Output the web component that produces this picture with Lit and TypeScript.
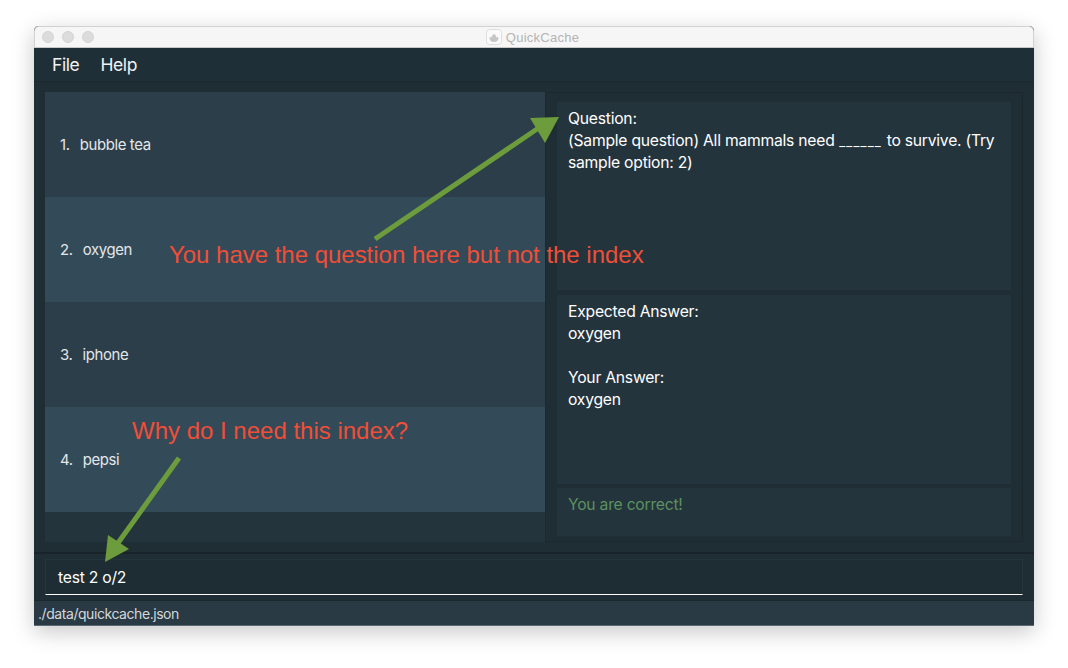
import { LitElement, html, css } from "lit";
import { customElement } from "lit/decorators.js";

@customElement("app-root")
export class AppRoot extends LitElement {
  static styles = css`
    :host { display: block; width: 1068px; height: 668px; background: #fff; position: relative; overflow: hidden; font-family: Inter, "Noto Sans", sans-serif; }
    .page { padding: 26px 34px 0; }
    .win { width: 1000px; height: 600px; border-radius: 5px 5px 2px 2px; display: flex; flex-direction: column; box-shadow: 0 6px 22px rgba(0,0,0,.22); overflow: hidden; background: #1f2d34; }
    .title { height: 22px; flex: none; background: #f6f6f6; border: 1px solid #d2d2d2; border-bottom-color: #c8c8c8; border-radius: 5px 5px 0 0; box-sizing: border-box; position: relative; display: flex; align-items: center; justify-content: center; gap: 4px; padding-right: 3px; color: #b4b4b4; font: 13px "Liberation Sans", sans-serif; letter-spacing: .25px; }
    .lights { position: absolute; left: 7px; top: 4px; display: flex; gap: 8px; }
    .lights i { width: 12px; height: 12px; border-radius: 50%; background: #dcdcdc; border: 1px solid #d2d2d2; box-sizing: border-box; }
    .appicon { width: 16px; height: 16px; }
    .menu { height: 34px; flex: none; box-sizing: border-box; background: #1f2f37; border-bottom: 1px solid #1a282e; display: flex; align-items: center; padding: 0 0 1px 18px; gap: 21px; color: #f0f2f3; font-size: 17.5px; letter-spacing: -.4px; }
    .main { height: 472px; flex: none; box-sizing: border-box; padding: 10px 11px; display: flex; background: #1f2e35; border-bottom: 2px solid #18242a; }
    .list { width: 500px; flex: none; background: #24343c; display: flex; flex-direction: column; }
    .cell { height: 105px; flex: none; display: flex; align-items: center; box-sizing: border-box; padding: 1px 0 0 15px; color: #e4e7e9; font-size: 14.9px; letter-spacing: -.35px; background: #2b3e4a; white-space: pre; }
    .cell.alt { background: #334a59; }
    .idx { margin-right: 10px; }
    .right { flex: 1; box-sizing: border-box; border: 1px solid #1b292f; background: #1f2e35; padding: 9px 11px 5px; display: flex; flex-direction: column; gap: 5px; }
    .card { background: #24343c; box-sizing: border-box; padding: 6px 11px; color: #fff; font-size: 15.7px; line-height: 22px; letter-spacing: -.24px; }
    .line { display: flex; white-space: pre; align-items: baseline; }
    .blank { font-size: 13px; letter-spacing: 1.2px; margin: 0 .5px; }
    .q { height: 188px; flex: none; }
    .a { height: 189px; flex: none; margin-bottom: -1px; }
    .r { flex: 1; color: #5c9160; }
    .cmdwrap { height: 47px; flex: none; box-sizing: border-box; padding: 5px 11px; background: #1f2e35; border-bottom: 1px solid #1a272d; display: flex; }
    .cmd { flex: 1; box-sizing: border-box; border: 1px solid #24343b; border-bottom: 1px solid #fff; background: #1e2d34; color: #fff; font-size: 15.7px; letter-spacing: -.24px; padding: 0 12px; display: flex; align-items: center; }
    .status { flex: 1; background: #293a45; color: #d4d8db; font-size: 14px; letter-spacing: -.44px; padding: 1px 4px 0; display: flex; align-items: center; border-bottom: 1px solid #5a6a72; }
    .overlay { position: absolute; inset: 0; width: 1068px; height: 668px; pointer-events: none; }
    .note { position: absolute; color: #f04e37; font: 24px/28px "Liberation Sans", sans-serif; white-space: nowrap; }
    .n1 { left: 169px; top: 241px; letter-spacing: -.02px; }
    .n2 { left: 132px; top: 417px; }
  `;

  render() {
    const rows = ["bubble tea", "oxygen", "iphone", "pepsi"];
    return html`
      <div class="page">
        <div class="win">
          <div class="title">
            <div class="lights"><i></i><i></i><i></i></div>
            <svg class="appicon" viewBox="0 0 16 16">
              <rect x=".5" y=".5" width="15" height="15" rx="3" fill="#fafafa" stroke="#dedede"/>
              <path d="M3.5 9 C3.5 7.5 5 8 5.5 8.5 C5.8 6.5 7 5.5 8 5 C9 5.5 10.2 6.5 10.5 8.5 C11 8 12.5 7.5 12.5 9 C12.5 11.5 10.5 13 8 13 C5.5 13 3.5 11.5 3.5 9 Z" fill="#c6c6c6"/>
            </svg>
            <span>QuickCache</span>
          </div>
          <div class="menu"><span>File</span><span>Help</span></div>
          <div class="main">
            <div class="list">
              ${rows.map((r, i) => html`<div class="cell ${i % 2 ? "alt" : ""}"><span class="idx">${i + 1}.</span>${r}</div>`)}
            </div>
            <div class="right">
              <div class="card q">
                <div>Question:</div>
                <div class="line"><span>(Sample question) All mammals need </span><span class="blank">______</span><span> to survive. (Try</span></div>
                <div>sample option: 2)</div>
              </div>
              <div class="card a">Expected Answer:<br />oxygen<br /><br />Your Answer:<br />oxygen</div>
              <div class="card r">You are correct!</div>
            </div>
          </div>
          <div class="cmdwrap"><div class="cmd">test 2 o/2</div></div>
          <div class="status">./data/quickcache.json</div>
        </div>
      </div>
      <svg class="overlay" viewBox="0 0 1068 668">
        <line x1="375" y1="239" x2="540" y2="127" stroke="#6d9c3c" stroke-width="5"/>
        <polygon points="559,117 530,118 545,143" fill="#6d9c3c"/>
        <line x1="179" y1="458" x2="118" y2="543" stroke="#6d9c3c" stroke-width="5"/>
        <polygon points="105,562 108,535 129,549" fill="#6d9c3c"/>
      </svg>
      <div class="note n1">You have the question here but not the index</div>
      <div class="note n2">Why do I need this index?</div>
    `;
  }
}
